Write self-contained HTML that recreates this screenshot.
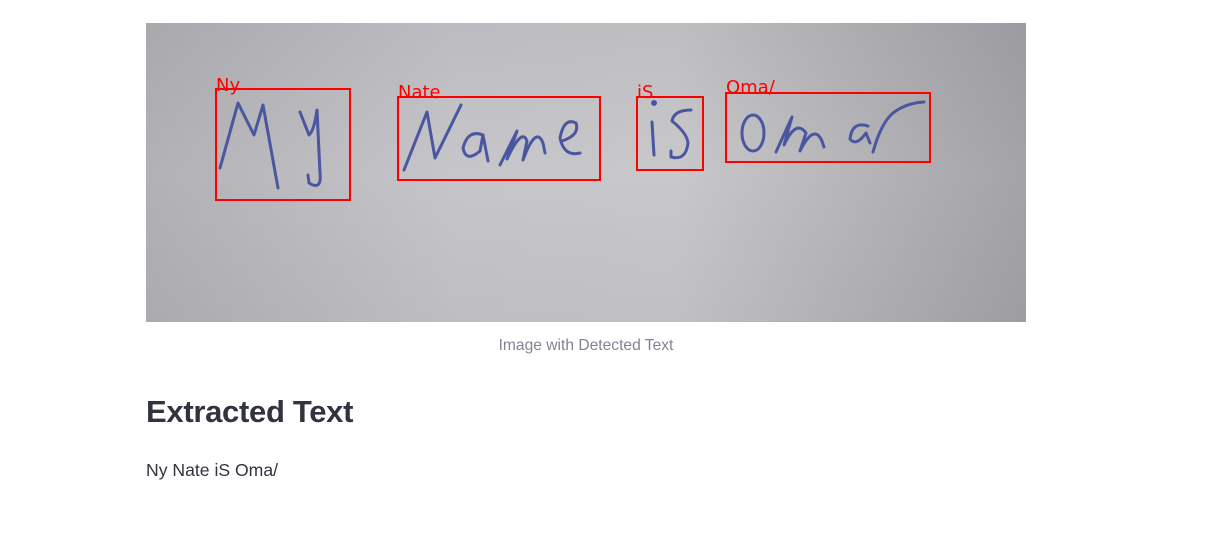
<!DOCTYPE html>
<html><head><style>
body{margin:0;background:#fff;width:1212px;height:551px;overflow:hidden;font-family:"Liberation Sans",sans-serif;color:#31333f}
.cap{position:absolute;left:146px;width:880px;top:337px;text-align:center;font-size:15.6px;color:#808495}
h2{position:absolute;left:146px;top:394px;margin:0;font-size:31px;font-weight:bold;letter-spacing:-0.3px}
.t{position:absolute;left:146px;top:460px;font-size:17.6px}
</style></head><body>
<svg style="position:absolute;left:146px;top:23px" width="880" height="299">
<defs>
<linearGradient id="g" x1="0" x2="1" y1="0" y2="0">
<stop offset="0" stop-color="#b2b1b5"/><stop offset="0.35" stop-color="#c6c5c9"/><stop offset="0.6" stop-color="#c8c8cb"/><stop offset="1" stop-color="#a4a3a7"/></linearGradient>
<linearGradient id="v" x1="0" x2="0" y1="0" y2="1"><stop offset="0" stop-color="#000" stop-opacity="0.05"/><stop offset="0.5" stop-color="#000" stop-opacity="0"/><stop offset="1" stop-color="#000" stop-opacity="0.04"/></linearGradient>
</defs>
<rect width="880" height="299" fill="url(#g)"/><rect width="880" height="299" fill="url(#v)"/>
<g fill="none" stroke="#4a56a0" stroke-width="3" stroke-linecap="round" stroke-linejoin="round">
<path d="M74 145 L92 80 L108 112 L117 82 L132 165"/>
<path d="M154 89 L163 112 Q168 108 171 87 L174 150 Q176 168 163 160 L162 152"/>
<path d="M258 147 L281 89 L289 135 L315 82"/>
<path d="M337 112 Q322 106 317 125 Q320 140 334 128 L337 112 L342 138"/>
<path d="M354 142 L371 108 L361 136 Q376 104 381 118 L377 137 Q390 102 397 120 L399 130"/>
<path d="M416 118 Q434 112 430 100 Q418 94 414 115 Q418 134 434 130"/>
<path d="M506 99 L508 132"/>
<circle cx="508" cy="80" r="1.5" fill="#4a56a0"/>
<path d="M545 87 Q528 87 526 98 Q541 110 542 120 Q540 138 525 134 L525 128"/>
<ellipse cx="607" cy="110" rx="11" ry="18"/>
<path d="M630 129 L646 94 L638 122 Q650 96 660 110 L654 128 Q668 100 676 118 L678 124"/>
<path d="M722 103 Q706 98 704 116 Q710 124 720 110 L724 120"/>
<path d="M727 129 Q735 100 747 90 Q760 80 778 79"/>
</g>
<g fill="none" stroke="#ff0000" stroke-width="2">
<rect x="70" y="66" width="134" height="111"/>
<rect x="252" y="74" width="202" height="83"/>
<rect x="491" y="74" width="66" height="73"/>
<rect x="580" y="70" width="204" height="69"/>
</g>
<g fill="#ff0000" font-family="DejaVu Sans, sans-serif" font-size="18">
<text x="70" y="68">Ny</text><text x="252" y="75">Nate</text><text x="491" y="75">iS</text><text x="580" y="70">Oma/</text>
</g>
</svg>
<div class="cap">Image with Detected Text</div>
<h2>Extracted Text</h2>
<div class="t">Ny Nate iS Oma/</div>
</body></html>
